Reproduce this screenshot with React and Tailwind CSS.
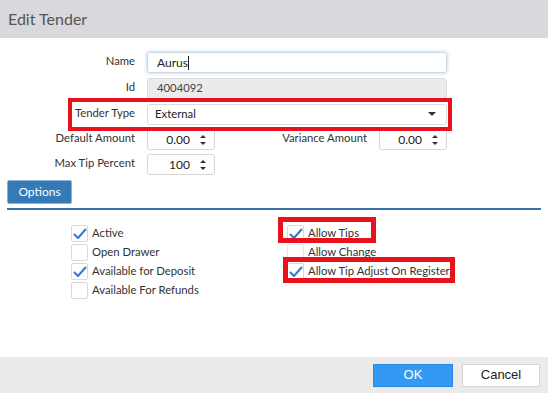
import React from 'react';

const Label = ({ children, className = '' }) => (
  <div className={`w-[135px] shrink-0 text-right leading-none pb-[4px] ${className}`}>{children}</div>
);

const Spinner = ({ value }) => (
  <div className="ml-3 w-[68px] h-[21px] border border-[#d6d6d6] rounded-[3px] bg-white flex items-center justify-end pr-[7px]">
    <span className="mr-[9px] text-[#222] text-[12px]">{value}</span>
    <svg width="8" height="14" viewBox="0 0 8 14">
      <path d="M1 5 L4 2 L7 5 Z" fill="#333" />
      <path d="M1 9 L4 12 L7 9 Z" fill="#333" />
    </svg>
  </div>
);

const Check = ({ checked, label, faint }) => (
  <div className="flex items-center h-[19px]">
    <div className={`w-[17px] h-[17px] border ${faint ? 'border-[#e6e6e6]' : 'border-[#d9d9d9]'} bg-white rounded-[2px] flex items-center justify-center`}>
      {checked && (
        <svg width="14" height="12" viewBox="0 0 14 12">
          <path d="M1.5 6.5 L5 10 L12.5 1.5" fill="none" stroke="#2b7bd3" strokeWidth="2" strokeLinecap="round" strokeLinejoin="round" />
        </svg>
      )}
    </div>
    <span className="ml-[4px] text-[#333]">{label}</span>
  </div>
);

export default function App() {
  return (
    <div className="w-[548px] h-[393px] flex flex-col bg-white font-['Lato',sans-serif] text-[11.3px] text-[#333] overflow-hidden">
      <div className="h-[38px] shrink-0 bg-[#d9d8dd] flex items-center pl-[8px] text-[16px] text-[#555]">Edit Tender</div>

      <div className="flex-1 flex flex-col pt-[14px]">
        <div className="flex items-center">
          <Label>Name</Label>
          <div className="ml-3 w-[300px] h-[21px] border border-[#cfd8e0] rounded-[3px] shadow-[0_0_3px_1px_rgba(140,190,240,0.45)] flex items-center pl-[9px] text-[#222] text-[12px]">
            Aurus<span className="w-px h-[14px] bg-[#222]" />
          </div>
        </div>

        <div className="flex items-center mt-[5px]">
          <Label>Id</Label>
          <div className="ml-3 w-[300px] h-[21px] border border-[#dcdcdc] rounded-[3px] bg-[#ebebeb] flex items-center pl-[9px] text-[#444]">4004092</div>
        </div>

        <div className="relative flex items-center mt-[5px]">
          <Label>Tender Type</Label>
          <div className="ml-3 w-[300px] h-[21px] border border-[#dcdcdc] rounded-[3px] bg-white flex items-center justify-between pl-[7px] pr-[10px] text-[#222]">
            <span>External</span>
            <svg width="8" height="5" viewBox="0 0 8 5"><path d="M0 0 L8 0 L4 4 Z" fill="#333" /></svg>
          </div>
          <div className="absolute left-[68px] top-[-6px] w-[384px] h-[33px] border-[4px] border-[#e8121c]" />
        </div>

        <div className="flex items-center mt-[4px]">
          <Label>Default Amount</Label>
          <Spinner value="0.00" />
          <div className="w-[152px] text-right leading-none pb-[4px]">Variance Amount</div>
          <Spinner value="0.00" />
        </div>

        <div className="flex items-center mt-[4px]">
          <Label>Max Tip Percent</Label>
          <Spinner value="100" />
        </div>

        <div className="mt-[5px] ml-[7px] w-[65px] h-[24px] bg-[#337ab7] border border-[#8eb3d6] rounded-[2px] text-white flex items-center justify-center text-[12px]">Options</div>
        <div className="mt-[4px] ml-[7px] w-[534px] h-[2px] bg-[#3d72a6]" />

        <div className="flex mt-[14px]">
          <div className="ml-[71px] w-[216px] flex flex-col">
            <Check checked label="Active" />
            <Check label="Open Drawer" />
            <Check checked label="Available for Deposit" />
            <Check label="Available For Refunds" />
          </div>
          <div className="relative flex flex-col">
            <Check checked label="Allow Tips" />
            <Check label="Allow Change" faint />
            <Check checked label="Allow Tip Adjust On Register" />
            <div className="absolute left-[-9px] top-[-7px] w-[98px] h-[26px] border-[5px] border-[#e8121c]" />
            <div className="absolute left-[-4px] top-[33px] w-[172px] h-[26px] border-[5px] border-[#e8121c]" />
          </div>
        </div>
      </div>

      <div className="h-[36px] shrink-0 bg-[#ebebeb] flex items-center justify-end pr-[8px] gap-[9px] font-['Liberation_Sans',sans-serif] text-[13px]">
        <div className="w-[80px] h-[23px] bg-[#3399f3] border border-[#2a88e0] text-white flex items-center justify-center">OK</div>
        <div className="w-[78px] h-[23px] bg-white border border-[#d4d4d4] text-[#222] flex items-center justify-center">Cancel</div>
      </div>
    </div>
  );
}
